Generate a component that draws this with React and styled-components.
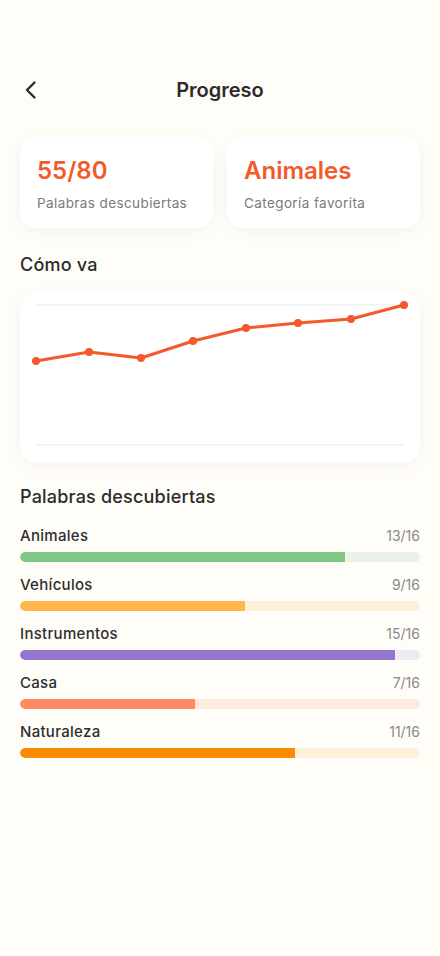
import React from 'react';
import styled, { createGlobalStyle } from 'styled-components';

const GlobalStyle = createGlobalStyle`
  html, body {
    margin: 0;
    padding: 0;
    background: #fffdf8;
  }
  body {
    font-family: Inter, "Noto Sans", sans-serif;
    color: #2b2b2b;
  }
`;

const Page = styled.div`
  width: 440px;
  min-height: 956px;
  background: #fffdf8;
  padding: 60px 20px 40px;
  box-sizing: border-box;
`;

const Header = styled.div`
  position: relative;
  height: 60px;
  display: flex;
  align-items: center;
  justify-content: center;
`;

const BackButton = styled.button`
  position: absolute;
  left: -2px;
  top: 50%;
  transform: translateY(-50%);
  border: none;
  background: none;
  padding: 0;
  display: flex;
  cursor: pointer;
`;

const Title = styled.h1`
  margin: 0;
  font-size: 20px;
  font-weight: 600;
  color: #2b2b2b;
`;

const Stats = styled.div`
  display: grid;
  grid-template-columns: 1fr 1fr;
  gap: 14px;
  margin-top: 17px;
`;

const Card = styled.div`
  background: #ffffff;
  border-radius: 16px;
  box-shadow: 0 4px 16px rgba(120, 100, 60, 0.06);
`;

const StatCard = styled(Card)`
  height: 91px;
  padding: 18px 17px 0;
  box-sizing: border-box;
`;

const StatValue = styled.div`
  font-size: 24px;
  font-weight: 600;
  color: #f25a2a;
  line-height: 32px;
`;

const StatLabel = styled.div`
  margin-top: 8px;
  font-size: 13.5px;
  color: #7a7a7a;
  letter-spacing: 0.4px;
`;

const SectionTitle = styled.h2`
  margin: ${p => p.$top}px 0 0;
  font-size: 18px;
  font-weight: 500;
  color: #2b2b2b;
  line-height: 26px;
  letter-spacing: 0.2px;
`;

const ChartCard = styled(Card)`
  margin-top: 14px;
  height: 170px;
  display: flex;
`;

const Rows = styled.div`
  display: flex;
  flex-direction: column;
  gap: 12px;
  margin-top: 15px;
`;

const Row = styled.div`
  display: flex;
  flex-direction: column;
  gap: 5px;
`;

const RowHead = styled.div`
  display: flex;
  justify-content: space-between;
  align-items: baseline;
  line-height: 22px;
`;

const RowLabel = styled.span`
  font-size: 15px;
  font-weight: 500;
  color: #2e2e2e;
  letter-spacing: 0.3px;
`;

const RowCount = styled.span`
  font-size: 14px;
  color: #8a8a8a;
`;

const Track = styled.div`
  height: 10px;
  border-radius: 5px;
  background: ${p => p.$bg};
  overflow: hidden;
`;

const Fill = styled.div`
  height: 100%;
  background: ${p => p.$color};
  border-radius: 5px 0 0 5px;
`;

const points = [
  [16, 69], [69, 60], [121, 66], [173, 49], [226, 36], [278, 31], [331, 27], [384, 13],
];

const categories = [
  { name: 'Animales', done: 13, color: '#81c784', bg: '#ebf3e9' },
  { name: 'Vehículos', done: 9, color: '#ffb74d', bg: '#fff0da' },
  { name: 'Instrumentos', done: 15, color: '#9575cd', bg: '#eeeaf2' },
  { name: 'Casa', done: 7, color: '#ff8a65', bg: '#feebe0' },
  { name: 'Naturaleza', done: 11, color: '#fb8c00', bg: '#feefd9' },
];

const Chart = () => (
  <svg width="400" height="170" viewBox="0 0 400 170">
    <line x1="16" y1="13" x2="384" y2="13" stroke="#eef0f3" strokeWidth="1.5" />
    <line x1="16" y1="153" x2="384" y2="153" stroke="#eef0f3" strokeWidth="1.5" />
    <polyline
      points={points.map(p => p.join(',')).join(' ')}
      fill="none"
      stroke="#f5582a"
      strokeWidth="3"
      strokeLinejoin="round"
      strokeLinecap="round"
    />
    {points.map(([x, y]) => (
      <circle key={x} cx={x} cy={y} r="4" fill="#f5582a" />
    ))}
  </svg>
);

const App = () => (
  <>
    <GlobalStyle />
    <Page>
      <Header>
        <BackButton aria-label="Volver">
          <svg width="28" height="28" viewBox="0 0 28 28" fill="none">
            <path d="M16.5 6.5L9 14l7.5 7.5" stroke="#2b2b2b" strokeWidth="2.4" strokeLinecap="round" strokeLinejoin="round" />
          </svg>
        </BackButton>
        <Title>Progreso</Title>
      </Header>

      <Stats>
        <StatCard>
          <StatValue>55/80</StatValue>
          <StatLabel>Palabras descubiertas</StatLabel>
        </StatCard>
        <StatCard>
          <StatValue>Animales</StatValue>
          <StatLabel>Categoría favorita</StatLabel>
        </StatCard>
      </Stats>

      <SectionTitle $top={24}>Cómo va</SectionTitle>
      <ChartCard>
        <Chart />
      </ChartCard>

      <SectionTitle $top={22}>Palabras descubiertas</SectionTitle>
      <Rows>
        {categories.map(c => (
          <Row key={c.name}>
            <RowHead>
              <RowLabel>{c.name}</RowLabel>
              <RowCount>{c.done}/16</RowCount>
            </RowHead>
            <Track $bg={c.bg}>
              <Fill $color={c.color} style={{ width: `${(c.done / 16) * 100}%` }} />
            </Track>
          </Row>
        ))}
      </Rows>
    </Page>
  </>
);

export default App;
